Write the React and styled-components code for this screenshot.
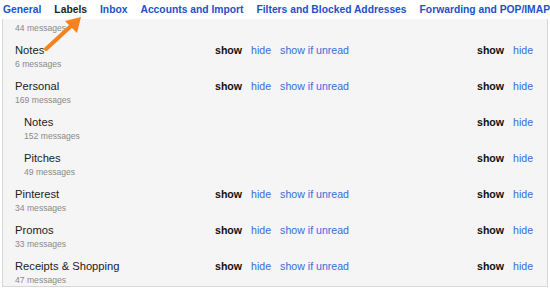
import styled, { createGlobalStyle } from "styled-components";

const GlobalStyle = createGlobalStyle`
  html, body {
    margin: 0;
    padding: 0;
    background: #fff;
  }
  body {
    font-family: Arial, "Liberation Sans", sans-serif;
  }
`;

const Page = styled.div`
  position: relative;
  width: 550px;
  height: 288px;
  overflow: hidden;
  background: #fff;
`;

const TabBar = styled.nav`
  display: flex;
  align-items: center;
  gap: 13px;
  height: 19px;
  padding-left: 3px;
  background: #fff;
  white-space: nowrap;
`;

const Tab = styled.a`
  font-size: 10.3px;
  font-weight: 700;
  color: ${(p) => (p.$active ? "#222" : "#2350c8")};
  text-decoration: none;
  cursor: pointer;
`;

const Panel = styled.div`
  margin: 0 2px;
  width: 544px;
  height: 267px;
  background: #f5f5f5;
  border: 1px solid #d8d8d8;
  border-top: none;
  overflow: hidden;
`;

const Row = styled.div`
  display: grid;
  grid-template-columns: ${(p) => 200 - p.$indent}px 262px 1fr;
  align-items: start;
  height: 36px;
  box-sizing: border-box;
  padding: 4px 0 4px ${(p) => 12 + p.$indent}px;
`;

const Partial = styled.div`
  padding: 2px 0 4px 12px;
`;

const Name = styled.div`
  font-size: 11.2px;
  line-height: 14px;
  color: #222;
`;

const Count = styled.div`
  font-size: 8.6px;
  line-height: 14px;
  color: #8a8a8a;
`;

const Actions = styled.div`
  display: flex;
  gap: 9px;
  height: 14px;
  align-items: center;
  white-space: nowrap;
`;

const Action = styled.span`
  font-size: 10.6px;
  line-height: 14px;
  font-weight: ${(p) => (p.$on ? 700 : 400)};
  color: ${(p) => (p.$on ? "#111" : "#3a6bd6")};
  cursor: ${(p) => (p.$on ? "default" : "pointer")};
`;

const Pointer = styled.svg`
  position: absolute;
  left: 40px;
  top: 12px;
  pointer-events: none;
`;

const tabs = [
  "General",
  "Labels",
  "Inbox",
  "Accounts and Import",
  "Filters and Blocked Addresses",
  "Forwarding and POP/IMAP",
];

const labels = [
  { name: "Notes", count: 6, list: true },
  { name: "Personal", count: 169, list: true },
  { name: "Notes", count: 152, indent: 9 },
  { name: "Pitches", count: 49, indent: 9 },
  { name: "Pinterest", count: 34, list: true },
  { name: "Promos", count: 33, list: true },
  { name: "Receipts & Shopping", count: 47, list: true },
];

const LabelRow = ({ label }) => {
  const { name, count, list, indent = 0 } = label;
  return (
    <Row $indent={indent}>
      <div>
        <Name>{name}</Name>
        <Count>{count} messages</Count>
      </div>
      <Actions>
        {list && (
          <>
            <Action $on>show</Action>
            <Action>hide</Action>
            <Action>show if unread</Action>
          </>
        )}
      </Actions>
      <Actions>
        <Action $on>show</Action>
        <Action>hide</Action>
      </Actions>
    </Row>
  );
};

export default function App() {
  return (
    <Page>
      <GlobalStyle />
      <TabBar>
        {tabs.map((t) => (
          <Tab key={t} $active={t === "Labels"}>
            {t}
          </Tab>
        ))}
      </TabBar>
      <Panel>
        <Partial>
          <Count>44 messages</Count>
        </Partial>
        {labels.map((l, i) => (
          <LabelRow key={i} label={l} />
        ))}
      </Panel>
      <Pointer width="50" height="45" viewBox="0 0 50 45">
        <line
          x1="6"
          y1="37"
          x2="31"
          y2="14"
          stroke="#f5821f"
          strokeWidth="4"
          strokeLinecap="round"
        />
        <polygon points="41,5 25,9 37,21" fill="#f5821f" />
      </Pointer>
    </Page>
  );
}
